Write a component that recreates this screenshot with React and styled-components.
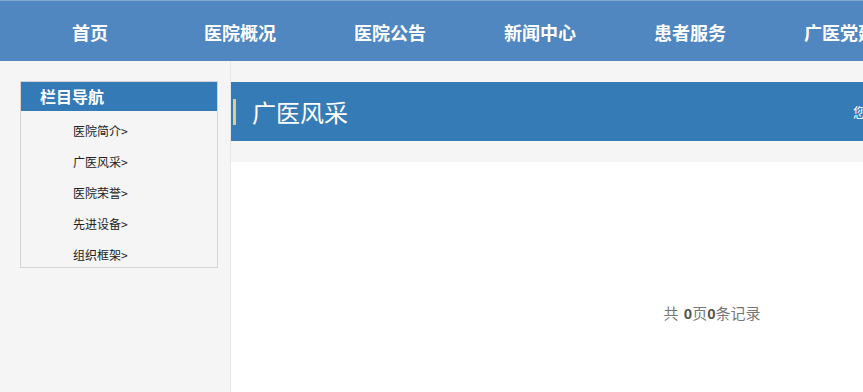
import React from "react";
import styled, { createGlobalStyle } from "styled-components";

const Global = createGlobalStyle`
  html, body { margin: 0; padding: 0; overflow: hidden; background: #f5f5f5; }
  body { font-family: "Microsoft YaHei", "Noto Sans CJK SC", "Noto Sans", sans-serif; }
  * { box-sizing: border-box; }
`;

const Page = styled.div`
  width: 1200px;
  height: 392px;
  display: flex;
  flex-direction: column;
`;

const NavBar = styled.nav`
  height: 61px;
  background: #5187c0;
  border-top: 1px solid #7fa8cd;
  display: flex;
  align-items: center;
  padding-left: 15px;
  flex-shrink: 0;
`;

const NavItem = styled.a`
  width: 150px;
  text-align: center;
  color: #fff;
  font-size: 18px;
  font-weight: bold;
  line-height: 24px;
  text-decoration: none;
  flex-shrink: 0;
  margin-top: 2px;
`;

const Body = styled.div`
  flex: 1;
  display: flex;
  min-height: 0;
`;

const Sidebar = styled.aside`
  width: 231px;
  flex-shrink: 0;
  background: #f5f5f5;
  border-right: 1px solid #e6e6e6;
  padding: 20px 0 0 20px;
`;

const SideBox = styled.div`
  width: 198px;
  border: 1px solid #d4d4d4;
  background: #f5f5f5;
`;

const SideHead = styled.h3`
  margin: 0;
  height: 29px;
  background: #337ab7;
  color: #fff;
  font-size: 16px;
  font-weight: bold;
  line-height: 29px;
  padding-left: 19px;
`;

const SideList = styled.ul`
  list-style: none;
  margin: 0;
  padding: 4px 0 0;
  height: 156px;
`;

const SideItem = styled.li`
  height: 31px;
  line-height: 31px;
  padding-left: 52px;
  font-size: 12px;
  color: #222;
`;

const Main = styled.main`
  width: 962px;
  flex-shrink: 0;
  background: #f5f5f5;
  padding-top: 21px;
  display: flex;
  flex-direction: column;
`;

const TitleBar = styled.div`
  height: 59px;
  background: #357cb7;
  display: flex;
  align-items: center;
  padding-left: 2px;
  padding-right: 20px;
`;

const Accent = styled.span`
  width: 3px;
  height: 26px;
  background: #e4cb8c;
  margin-right: 16px;
`;

const Title = styled.h2`
  margin: 0;
  font-size: 24px;
  font-weight: normal;
  color: #fff;
  line-height: 30px;
  flex: 1;
`;

const Crumb = styled.div`
  width: 320px;
  font-size: 13px;
  color: #fff;
  white-space: nowrap;
`;

const Content = styled.div`
  margin-top: 21px;
  background: #fff;
  flex: 1;
  display: flex;
  justify-content: center;
  padding-top: 141px;
`;

const Pager = styled.div`
  font-size: 15px;
  color: #777;
  line-height: 20px;
  word-spacing: 2px;
  b { color: #555; font-family: "Liberation Sans", Arial, sans-serif; }
`;

const navItems = ["首页", "医院概况", "医院公告", "新闻中心", "患者服务", "广医党建", "科室导航", "联系我们"];
const sideItems = ["医院简介", "广医风采", "医院荣誉", "先进设备", "组织框架"];

export default function App() {
  return (
    <>
      <Global />
      <Page>
        <NavBar>
          {navItems.map((n) => (
            <NavItem key={n} href="#">{n}</NavItem>
          ))}
        </NavBar>
        <Body>
          <Sidebar>
            <SideBox>
              <SideHead>栏目导航</SideHead>
              <SideList>
                {sideItems.map((s) => (
                  <SideItem key={s}>{s}&gt;</SideItem>
                ))}
              </SideList>
            </SideBox>
          </Sidebar>
          <Main>
            <TitleBar>
              <Accent />
              <Title>广医风采</Title>
              <Crumb>您现在的位置：首页 &gt; 医院概况 &gt; 广医风采</Crumb>
            </TitleBar>
            <Content>
              <Pager>
                共 <b>0</b>页<b>0</b>条记录
              </Pager>
            </Content>
          </Main>
        </Body>
      </Page>
    </>
  );
}
